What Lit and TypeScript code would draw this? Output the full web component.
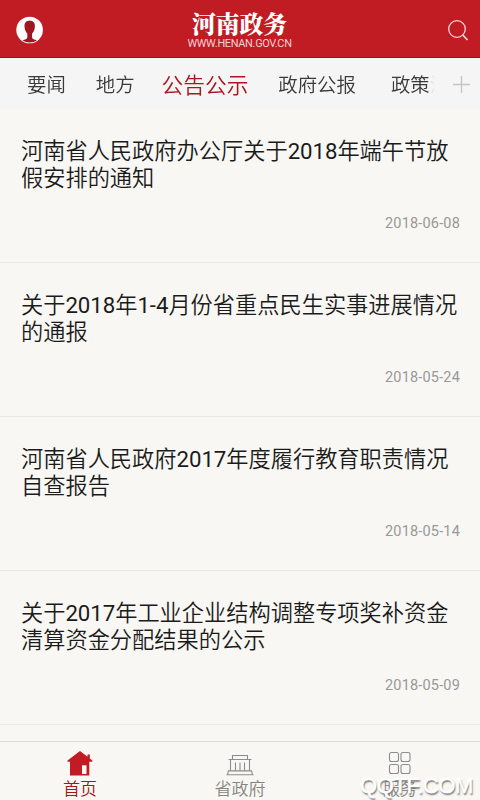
import { LitElement, html, css } from "lit";
import { customElement } from "lit/decorators.js";
import { classMap } from "lit/directives/class-map.js";

interface Notice {
  lines: string[];
  date: string;
}

const notices: Notice[] = [
  { lines: ["河南省人民政府办公厅关于2018年端午节放", "假安排的通知"], date: "2018-06-08" },
  { lines: ["关于2018年1-4月份省重点民生实事进展情况", "的通报"], date: "2018-05-24" },
  { lines: ["河南省人民政府2017年度履行教育职责情况", "自查报告"], date: "2018-05-14" },
  { lines: ["关于2017年工业企业结构调整专项奖补资金", "清算资金分配结果的公示"], date: "2018-05-09" },
];

const channels = ["要闻", "地方", "公告公示", "政府公报", "政策法规"];

@customElement("app-header")
export class AppHeader extends LitElement {
  static styles = css`
    :host {
      display: grid;
      grid-template-columns: 1fr auto 1fr;
      align-items: start;
      box-sizing: border-box;
      height: 58px;
      padding: 0 11px 0 16px;
      background: #c11b23;
      border-bottom: 1px solid #98151b;
      color: #fff;
    }
    svg { display: block; }
    .user { margin-top: 16px; }
    .search { margin-top: 19px; justify-self: end; }
    .brand {
      display: flex;
      flex-direction: column;
      align-items: center;
      margin: 11px 6px 0 0;
    }
    .name {
      font: 900 23.8px/25px "Noto Serif CJK SC", "Noto Sans CJK SC", sans-serif;
      white-space: nowrap;
    }
    .site {
      margin-top: 2px;
      font: 400 10.9px/12px Roboto, sans-serif;
      letter-spacing: -0.3px;
      color: #f8d2d4;
      white-space: nowrap;
    }
  `;
  render() {
    return html`
      <svg class="user" width="28" height="29" viewBox="0 0 28 29">
        <circle cx="13.6" cy="14" r="13.3" fill="#fff" />
        <path d="M13.7 4.7c-3.5 0-5.4 2-5.2 5.6.1 3.5 1.2 5.700 2.800 7.300v4c0 1.600-2.300 1.900-4.800 2.600 3.900 2.900 10.500 2.900 14.400 0-2.500-.7-4.800-1-4.800-2.600v-4c1.600-1.600 2.700-3.800 2.800-7.300.2-3.600-1.700-5.600-5.200-5.600z" fill="#9e171e" />
      </svg>
      <div class="brand">
        <div class="name">河南政务</div>
        <div class="site">WWW.HENAN.GOV.CN</div>
      </div>
      <svg class="search" width="21" height="22" viewBox="0 0 21 22" fill="none" stroke="#fbd8d9" stroke-width="1.3">
        <circle cx="9" cy="10" r="8.3" />
        <path d="M14.8 16l4.7 5" stroke-width="1.7" />
      </svg>
    `;
  }
}

@customElement("channel-bar")
export class ChannelBar extends LitElement {
  static styles = css`
    :host {
      display: flex;
      height: 51px;
      background: #f5f5f5;
      color: #3a3a3a;
    }
    .strip {
      display: flex;
      align-items: center;
      gap: 30px;
      box-sizing: border-box;
      width: 435px;
      padding: 4px 0 0 27px;
      overflow: hidden;
      font: 350 19.4px/47px Roboto, "Noto Sans CJK SC", sans-serif;
      white-space: nowrap;
      -webkit-mask-image: linear-gradient(to right, #000 428px, rgba(0, 0, 0, 0.15) 431px, transparent 435px);
      mask-image: linear-gradient(to right, #000 428px, rgba(0, 0, 0, 0.15) 431px, transparent 435px);
    }
    .active {
      margin-left: -3px;
      color: #a91820;
      font-size: 21.7px;
    }
    .last { margin-left: 5px; }
    .add { margin: 18px 0 0 18px; }
  `;
  render() {
    return html`
      <div class="strip">
        ${channels.map((name, i) => html`<span class=${classMap({ active: i === 2, last: i === 4 })}>${name}</span>`)}
      </div>
      <svg class="add" width="17" height="17" viewBox="0 0 17 17" stroke="#c6c6c6" stroke-width="1.4">
        <path d="M8.5 0v17M0 8.5h17" />
      </svg>
    `;
  }
}

@customElement("notice-list")
export class NoticeList extends LitElement {
  static styles = css`
    :host { display: block; }
    .item {
      box-sizing: border-box;
      height: 154px;
      padding: 29px 20px 0 21px;
      border-bottom: 1px solid #e9e8e5;
    }
    .title {
      font: 350 22.23px/27px Roboto, "Noto Sans CJK SC", sans-serif;
      color: #1b1b1b;
      white-space: nowrap;
    }
    .num { font-weight: 400; letter-spacing: -0.05px; }
    .date {
      margin-top: 22px;
      text-align: right;
      font: 400 14.5px/20px Roboto, sans-serif;
      letter-spacing: 0.18px;
      color: #999;
    }
  `;
  private line(text: string) {
    return html`<div>${text.split(/([\d-]+)/).map((part, i) => (i % 2 ? html`<span class="num">${part}</span>` : part))}</div>`;
  }
  render() {
    return notices.map(
      (n) => html`
        <div class="item">
          <div class="title">${n.lines.map((l) => this.line(l))}</div>
          <div class="date">${n.date}</div>
        </div>
      `
    );
  }
}

@customElement("tab-bar")
export class TabBar extends LitElement {
  static styles = css`
    :host {
      display: grid;
      grid-template-columns: repeat(3, 1fr);
      box-sizing: border-box;
      height: 59px;
      border-top: 1px solid #dddcda;
      color: #858585;
      font: 350 17px/22px Roboto, "Noto Sans CJK SC", sans-serif;
    }
    .tab {
      display: flex;
      flex-direction: column;
      align-items: center;
      padding-top: 8px;
    }
    .on { color: #a0161d; }
    svg { display: block; margin-bottom: 1px; }
  `;
  render() {
    return html`
      <div class="tab on">
        <svg width="28" height="27" viewBox="0 0 28 27">
          <path d="M14 1L1.5 10.5v1.2H4V25.5h19.3V11.7h3v-1.2l-2.5-2V4.5h-2.3v2.2z" fill="#c11b23" />
          <path d="M16 15.3h4.5v8.7h-4.500z" fill="#faf6f3" />
        </svg>
        <span>首页</span>
      </div>
      <div class="tab">
        <svg width="28" height="27" viewBox="0 0 28 27" fill="none" stroke="#8d8d8d" stroke-width="1.1">
          <path d="M6.5 9V5.5h15V9M2.5 9.5h23M4.5 9.5v11M23.5 9.5v11M9.5 12.5v8M14 12.5v8M18.5 12.5v8M2 20.900h24M.5 24.700h27M2.500 20.900l-1 3.500M25.500 20.900l1 3.500" />
        </svg>
        <span>省政府</span>
      </div>
      <div class="tab">
        <svg width="24" height="27" viewBox="0 0 24 27" fill="none" stroke="#8d8d8d" stroke-width="1.1">
          <rect x="1.5" y="2.500" width="9" height="9" rx="2" />
          <rect x="13" y="2.500" width="9" height="9" rx="2" />
          <rect x="1.5" y="14.500" width="9" height="9" rx="2" />
          <rect x="13" y="14.500" width="9" height="9" rx="2" />
        </svg>
        <span>服务</span>
      </div>
    `;
  }
}

@customElement("app-root")
export class AppRoot extends LitElement {
  static styles = css`
    :host {
      position: relative;
      display: flex;
      flex-direction: column;
      width: 480px;
      height: 800px;
      overflow: hidden;
      background: #f8f7f3;
    }
    .content { flex: 1; }
    .mark {
      position: absolute;
      right: 7px;
      bottom: 2px;
      font: 22px/24px "Liberation Sans", sans-serif;
      letter-spacing: -0.4px;
      color: #fff;
      -webkit-text-stroke: 0.5px #fff;
      text-shadow: 1px 2px 1.5px #777;
    }
  `;
  render() {
    return html`
      <app-header></app-header>
      <channel-bar></channel-bar>
      <notice-list class="content"></notice-list>
      <tab-bar></tab-bar>
      <div class="mark">QQTF.COM</div>
    `;
  }
}
